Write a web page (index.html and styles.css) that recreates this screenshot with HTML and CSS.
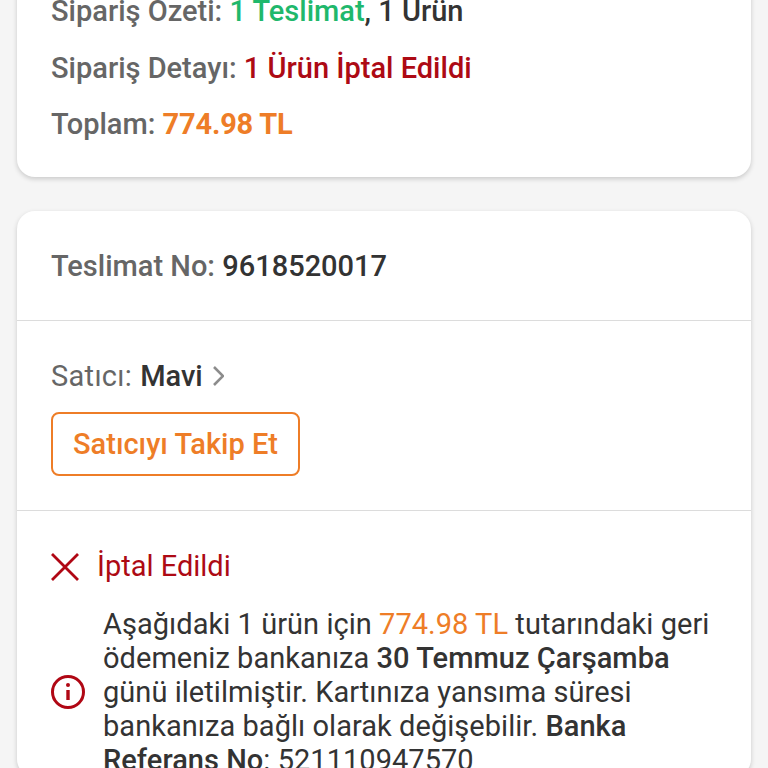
FILE: index.html
```html
<!DOCTYPE html>
<html lang="tr">
<head>
  <meta charset="UTF-8" />
  <meta name="viewport" content="width=device-width, initial-scale=1.0">
  <title>Sipariş Detayı</title>
  <link rel="stylesheet" href="styles.css">
</head>
<body>

<div class="page">
  <!-- Özet -->
  <section class="card summary">
    <p class="row">Sipariş Özeti: <span class="green">1 Teslimat</span><span class="dark">, 1 Ürün</span></p>
    <p class="row">Sipariş Detayı: <span class="red">1 Ürün İptal Edildi</span></p>
    <p class="row">Toplam: <b class="orange">774.98 TL</b></p>
  </section>

  <section class="card">
    <div class="delivery">
      <p class="row">Teslimat No: <span class="dark">9618520017</span></p>
    </div>

    <div class="seller">
      <p class="row seller-name"><span class="light">Satıcı:</span> <span class="dark">Mavi</span>
        <svg class="chevron" width="12" height="22" viewBox="0 0 12 22"><path d="M2 2l9 9-9 9" fill="none" stroke="#8c8c8c" stroke-width="2.6"/></svg>
      </p>
      <button class="follow-btn">Satıcıyı Takip Et</button>
    </div>

    <div class="status">
      <div class="status-head">
        <svg width="28" height="28" viewBox="0 0 28 28"><path d="M1 1l26 26M27 1L1 27" fill="none" stroke="#b00714" stroke-width="2.8"/></svg>
        <span>İptal Edildi</span>
      </div>
      <div class="refund">
        <svg class="info" width="34" height="34" viewBox="0 0 34 34">
          <circle cx="17" cy="17" r="15.5" fill="none" stroke="#b00714" stroke-width="3"/>
          <path d="M17 15v10" stroke="#b00714" stroke-width="3.4"/>
          <circle cx="17" cy="10" r="2" fill="#b00714"/>
        </svg>
        <p>Aşağıdaki 1 ürün için <span class="orange">774.98 TL</span> tutarındaki geri ödemeniz bankanıza <b>30 Temmuz Çarşamba</b> günü iletilmiştir. Kartınıza yansıma süresi bankanıza bağlı olarak değişebilir. <b>Banka Referans No</b>: 521110947570</p>
      </div>
    </div>
  </section>
</div>

</body>
</html>
```

FILE: styles.css
```css
html, body {
  margin: 0;
  padding: 0;
  height: 100%;
  overflow: hidden;
}

body {
  font-family: Roboto, "Liberation Sans", sans-serif;
  background: #f5f5f5;
  color: #333;
}

.page {
  display: flex;
  flex-direction: column;
  gap: 34px;
  padding: 0 17px;
  margin-top: -30px;
}

.card {
  background: #fff;
  border-radius: 18px;
  box-shadow: 0 2px 5px rgba(0, 0, 0, 0.18);
}

.summary {
  display: flex;
  flex-direction: column;
  gap: 23.5px;
  padding: 25px 34px 36px;
}

.row {
  margin: 0;
  font-size: 29px;
  line-height: 33px;
  font-weight: 500;
  color: #666;
}

.green { color: #1fb86c; }
.red { color: #ad0a14; }
.orange { color: #ee7d27; }
.dark { color: #333; }

.light {
  font-weight: 400;
  letter-spacing: 0.3px;
}

.row b {
  font-weight: 700;
  letter-spacing: -0.2px;
}

.delivery {
  padding: 39px 34px 37px;
  border-bottom: 1px solid #dcdcdc;
}

.seller {
  padding: 39px 34px 34px;
  border-bottom: 1px solid #dcdcdc;
}

.seller-name {
  display: flex;
  align-items: center;
  gap: 8px;
}

.chevron {
  margin-left: 1px;
  margin-top: -2px;
}

.follow-btn {
  display: block;
  margin-top: 19px;
  height: 64px;
  width: 249px;
  padding: 0;
  font-family: inherit;
  font-size: 29px;
  font-weight: 500;
  color: #ee7d27;
  background: #fff;
  border: 2px solid #ee7d27;
  border-radius: 8px;
}

.status {
  padding: 39px 34px 0;
}

.status-head {
  display: flex;
  align-items: center;
  gap: 18px;
  font-size: 29px;
  line-height: 33px;
  color: #ad0a14;
}

.refund {
  display: flex;
  align-items: center;
  gap: 18px;
  margin-top: 24px;
}

.info {
  flex: none;
}

.refund p {
  margin: 0;
  font-size: 29px;
  line-height: 34px;
  letter-spacing: 0.04px;
  color: #333;
}

.refund b {
  font-weight: 500;
}
```
